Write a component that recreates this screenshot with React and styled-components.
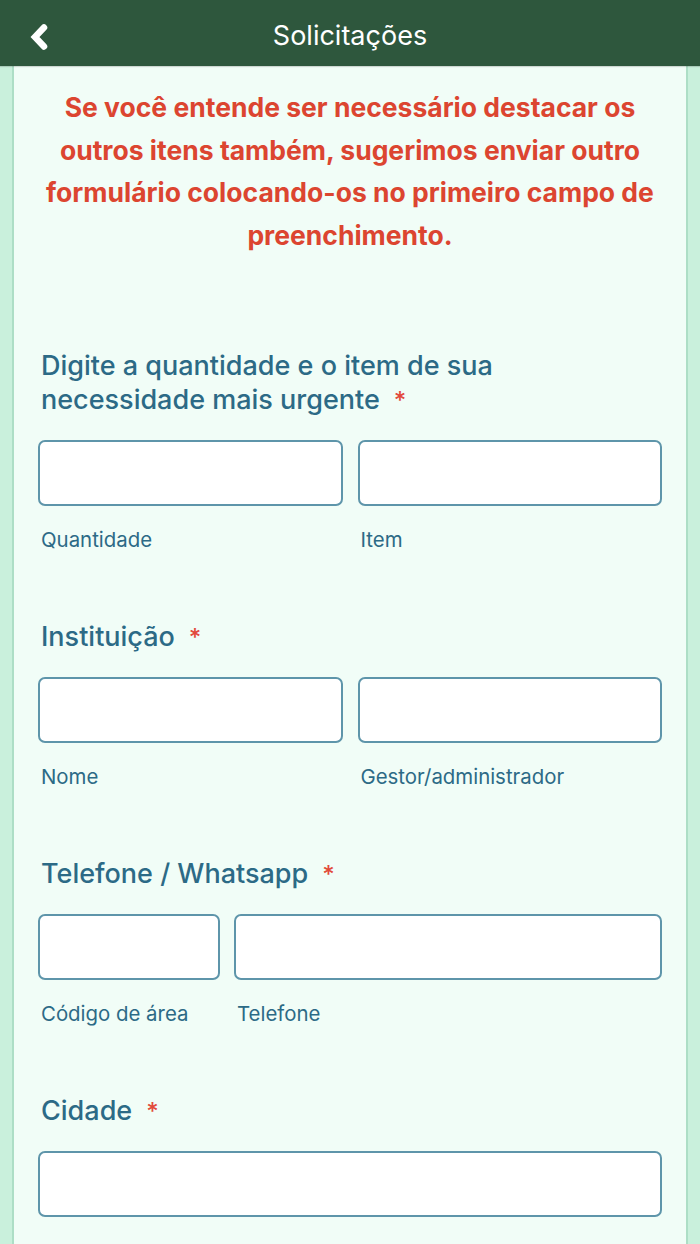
import React from 'react';
import styled, { createGlobalStyle } from 'styled-components';

const GlobalStyle = createGlobalStyle`
  html, body {
    margin: 0;
    padding: 0;
    background: #c9f0dc;
    font-family: Inter, "Noto Sans", "Liberation Sans", sans-serif;
  }
`;

const Page = styled.div`
  width: 700px;
  height: 1244px;
  overflow: hidden;
  background: #c9f0dc;
  display: flex;
  flex-direction: column;
`;

const Header = styled.header`
  height: 66px;
  flex-shrink: 0;
  background: #2e573d;
  display: flex;
  align-items: center;
  justify-content: center;
  position: relative;
  box-shadow: 0 1px 1px rgba(0, 0, 0, 0.15);
`;

const BackButton = styled.button`
  position: absolute;
  left: 27px;
  top: 22px;
  width: 26px;
  height: 30px;
  padding: 0;
  border: none;
  background: none;
  display: flex;
  align-items: center;
  justify-content: center;
`;

const Title = styled.h1`
  margin: 4px 0 0;
  color: #ffffff;
  font-size: 27px;
  font-weight: 400;
`;

const Card = styled.main`
  flex: 1;
  margin: 0 14px;
  background: #f1fdf7;
  padding: 20px 24px 0;
  box-shadow: -2px 0 0 rgba(140, 200, 170, 0.45), 2px 0 0 rgba(140, 200, 170, 0.45);
`;

const Notice = styled.p`
  margin: 0 -6px 93px;
  color: #dc4530;
  font-size: 26.5px;
  font-weight: 700;
  line-height: 42.6px;
  text-align: center;
`;

const Field = styled.section`
  margin-bottom: 68px;
`;

const Label = styled.h2`
  margin: 0 0 23px;
  padding-left: 3px;
  color: #2c6a86;
  font-size: 27px;
  font-weight: 500;
  line-height: 34px;
  max-width: 500px;
`;

const Required = styled.span`
  color: #e24a3b;
  font-size: 24px;
  line-height: 0;
  margin-left: 14px;
`;

const Row = styled.div`
  display: grid;
  grid-template-columns: ${(p) => p.$cols || '1fr'};
  column-gap: ${(p) => p.$gap || '15px'};
`;

const Cell = styled.div`
  display: flex;
  flex-direction: column;
`;

const Input = styled.input`
  box-sizing: border-box;
  height: 66px;
  width: 100%;
  border: 2px solid #5e95aa;
  border-radius: 7px;
  background: #ffffff;
  margin: 0;
`;

const Hint = styled.span`
  margin-top: 22px;
  padding-left: 3px;
  color: #2c6a86;
  font-size: 20.4px;
  line-height: 24px;
`;

function Chevron() {
  return (
    <svg width="22" height="26" viewBox="0 0 22 26">
      <path d="M15 3.5 L6 13 L15 22.5" fill="none" stroke="#fff" strokeWidth="6.5" strokeLinecap="round" strokeLinejoin="miter" />
    </svg>
  );
}

const fields = [
  { label: 'Digite a quantidade e o item de sua necessidade mais urgente', cols: '1fr 1fr', gap: '15px', hints: ['Quantidade', 'Item'] },
  { label: 'Instituição', cols: '1fr 1fr', gap: '15px', hints: ['Nome', 'Gestor/administrador'] },
  { label: 'Telefone / Whatsapp', cols: '182px 1fr', gap: '14px', hints: ['Código de área', 'Telefone'] },
  { label: 'Cidade', cols: '1fr', gap: '0', hints: [null] },
];

export default function App() {
  return (
    <Page>
      <GlobalStyle />
      <Header>
        <BackButton aria-label="Voltar">
          <Chevron />
        </BackButton>
        <Title>Solicitações</Title>
      </Header>
      <Card>
        <Notice>
          Se você entende ser necessário destacar os outros itens também, sugerimos enviar outro formulário colocando-os no primeiro campo de preenchimento.
        </Notice>
        {fields.map((f) => (
          <Field key={f.label}>
            <Label>
              {f.label}
              <Required>*</Required>
            </Label>
            <Row $cols={f.cols} $gap={f.gap}>
              {f.hints.map((h, i) => (
                <Cell key={i}>
                  <Input type="text" />
                  {h && <Hint>{h}</Hint>}
                </Cell>
              ))}
            </Row>
          </Field>
        ))}
      </Card>
    </Page>
  );
}
